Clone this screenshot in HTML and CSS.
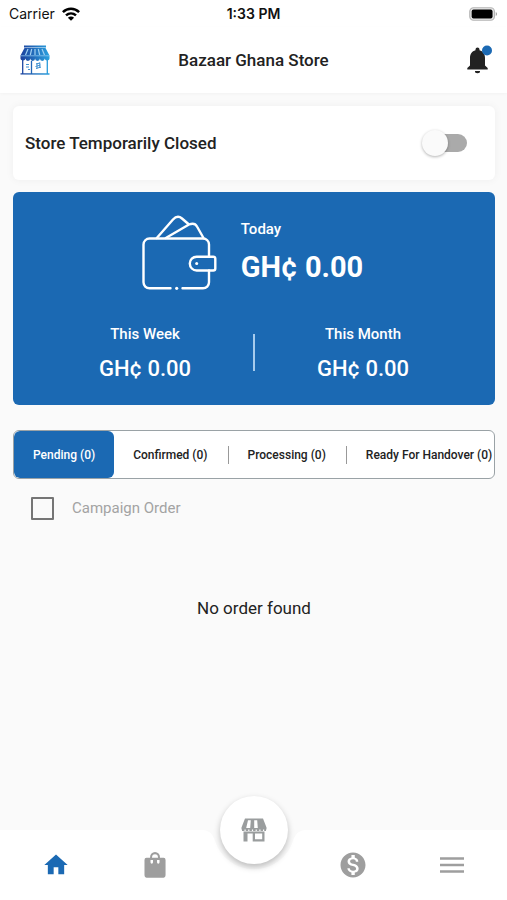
FILE: index.html
```html
<!DOCTYPE html>
<html lang="en">
<head>
<meta charset="utf-8">
<meta name="viewport" content="width=device-width, initial-scale=1">
<title>Bazaar Ghana Store</title>
<link rel="stylesheet" href="styles.css">
</head>
<body>
<div class="status">
  <div class="carrier">Carrier
    <svg width="18" height="14" viewBox="0 0 18 14" aria-hidden="true">
      <g fill="none" stroke="#000" stroke-width="2.5">
        <path d="M.9 5.2C5.5.7 12.500.7 17.100 5.200"/>
        <path d="M4 8.400c2.900-2.700 7.100-2.700 10 0"/>
      </g>
      <path d="M9 13.800 5.900 10.700c1.800-1.500 4.400-1.500 6.200 0z"/>
    </svg>
  </div>
  <div class="time">1:33 PM</div>
  <svg class="battery" width="29" height="14" viewBox="0 0 31 15" aria-hidden="true">
    <rect x=".8" y=".8" width="26.400" height="13.400" rx="4" fill="#e8e8e8" stroke="#b5b5b5" stroke-width="1.300"/>
    <rect x="2.800" y="2.800" width="22.400" height="9.400" rx="2"/>
    <path d="M28.600 5.300c1.900.8 1.900 3.600 0 4.400z" fill="#a5a5a5"/>
  </svg>
</div>

<header class="header">
  <svg class="logo" width="30" height="30" viewBox="0 0 30 30" aria-hidden="true">
    <defs>
      <linearGradient id="blue" gradientUnits="userSpaceOnUse" x1="0" y1="0" x2="30" y2="0">
        <stop offset="0" stop-color="#1c3f9c"/>
        <stop offset="1" stop-color="#2aa3e0"/>
      </linearGradient>
    </defs>
    <path fill="url(#blue)" d="M4 .5h22v2H4zM4.500 3h21L29.500 10.500v2a2.400 2.400 0 0 1-4.800 1 2.400 2.400 0 0 1-4.800 0 2.400 2.400 0 0 1-4.800 0 2.400 2.400 0 0 1-4.800 0 2.400 2.400 0 0 1-4.800 0A2.400 2.400 0 0 1 .5 12.500v-2z"/>
    <path fill="none" stroke="#9fd0f2" stroke-width="1.200" d="M8 4 5.500 10M11.700 4l-1.400 6M15 4v6M18.300 4l1.400 6M22 4l2.500 6"/>
    <path fill="none" stroke="#8cc6ef" stroke-width=".8" d="M1 10.800h28"/>
    <path fill="none" stroke="url(#blue)" stroke-width="1.300" d="M2.700 15v13.500M27.300 15v13.500M11.500 16v12.500M.5 28.900l29 .1"/>
    <path fill="none" stroke="#3e8fd0" stroke-width="1" d="M6 19.500h3M6 22h3M8 24.500h2M16 19l4-1M15.500 21.500l5-1.500M16 23.500l5-1.500M17 18v5.500M19.800 17.500v5.500"/>
  </svg>
  <h1>Bazaar Ghana Store</h1>
  <button class="bell" type="button" aria-label="Notifications">
    <svg width="26" height="30" viewBox="0 0 26 30" aria-hidden="true">
      <path fill="#222" d="M10.500 28.200a2.500 2 0 0 1-2.500-2.200h5a2.500 2 0 0 1-2.500 2.200zM18 20.500l2.700 2.500v1.400H.3V23L3 20.500V13c0-4 2-6.800 5.500-7.700v-.8a2 2 0 0 1 4 0v.8C16 6.200 18 9 18 13z"/>
      <circle cx="20" cy="5.500" r="5" fill="#1b69b3"/>
    </svg>
  </button>
</header>

<main>
  <label class="closed">
    <span>Store Temporarily Closed</span>
    <input class="switch" type="checkbox" role="switch">
  </label>

  <section class="earnings">
    <div class="today">
      <svg width="76" height="76" viewBox="0 0 76 76" fill="none" stroke="#fff" stroke-width="2.400" stroke-linecap="round" stroke-linejoin="round" aria-hidden="true">
        <path d="M29.500 74.300H8.500a6 6 0 0 1-6-6V30.500a6 6 0 0 1 6-6H62a6 6 0 0 1 6 6v12M68 56.500v11.800a6 6 0 0 1-6 6H41.500"/>
        <path d="M74.300 44.500v10a2 2 0 0 1-2 2H55.700a6.900 6.900 0 0 1 0-13.800h16.600a2 2 0 0 1 2 1.800z"/>
        <path d="M15.800 24 32 5.500q4.500-5 9-1L48 10.500M24.800 24 48 10.500c4-1.600 6.500-.8 8 2L62.500 24"/>
        <g fill="#fff" stroke="none"><circle cx="55.700" cy="49.500" r="1.500"/><circle cx="35.700" cy="74.300" r="1.600"/></g>
      </svg>
      <div>
        <h2>Today</h2>
        <p class="total">GH¢ 0.00</p>
      </div>
    </div>
    <div class="periods">
      <div>
        <h2>This Week</h2>
        <p>GH¢ 0.00</p>
      </div>
      <hr>
      <div>
        <h2>This Month</h2>
        <p>GH¢ 0.00</p>
      </div>
    </div>
  </section>

  <div class="tabs" role="tablist">
    <button type="button" role="tab" aria-selected="true">Pending (0)</button>
    <button type="button" role="tab">Confirmed (0)</button>
    <button type="button" role="tab">Processing (0)</button>
    <button type="button" role="tab">Ready For Handover (0)</button>
  </div>

  <label class="campaign">
    <input type="checkbox">
    <span>Campaign Order</span>
  </label>

  <p class="empty">No order found</p>
</main>

<nav class="nav">
  <div class="bar" aria-hidden="true">
    <span></span>
    <svg width="110" height="70" viewBox="0 0 110 70"><path fill="#fff" d="M0 0h3C11 0 14 5 16 11A41 41 0 0 0 94 11C96 5 99 0 107 0h3v70H0z"/></svg>
    <span></span>
  </div>
  <a href="#home" aria-label="Home">
    <svg width="28" height="28" viewBox="0 0 24 24" fill="#1b69b3"><path d="M10 20v-6h4v6h5v-8h3L12 3 2 12h3v8z"/></svg>
  </a>
  <a href="#orders" aria-label="Orders">
    <svg width="28" height="28" viewBox="0 0 24 24" fill="#9e9e9e"><path d="M20.500 5.500H17a5 5 0 0 0-10 0H3.500a2 2 0 0 0-2 2V21a2 2 0 0 0 2 2h17a2 2 0 0 0 2-2V7.500a2 2 0 0 0-2-2zM10 9.500a1.200 1.200 0 0 1-2.500 0v-2H10zm-1-4a3 3 0 0 1 6 0zm7.500 4a1.200 1.200 0 0 1-2.500 0v-2h2.500z" transform="translate(1.700 .3) scale(.86 .98)"/></svg>
  </a>
  <a class="store" href="#store" aria-label="Store">
    <svg width="26" height="24" viewBox="0 0 26 24" fill="#9a9d9e">
      <path fill-rule="evenodd" d="M4 .5h18l3.500 9v2H.5v-2zM7 2.300 5.200 10h4l.6-7.700zM13.200 2.300V10h3.600l-.6-7.700z"/>
      <path fill="none" stroke="#9a9d9e" stroke-width="1.800" stroke-dasharray="2.500 1.200" d="M1 12h24"/>
      <path fill-rule="evenodd" d="M2.500 13.500h21v10H11.700V15.500H6.500v8h-4zM14 15.500v5.700h7.200v-5.700z"/>
    </svg>
  </a>
  <a href="#wallet" aria-label="Wallet">
    <svg width="30" height="30" viewBox="0 0 24 24" fill="#9e9e9e"><path d="M12 2C6.480 2 2 6.480 2 12s4.480 10 10 10 10-4.480 10-10S17.520 2 12 2zm1.410 16.090V20h-2.670v-1.930c-1.710-.36-3.160-1.460-3.270-3.400h1.960c.1 1.050.82 1.870 2.650 1.870 1.960 0 2.400-.98 2.400-1.590 0-.83-.44-1.610-2.670-2.140-2.480-.6-4.180-1.620-4.180-3.670 0-1.720 1.390-2.840 3.110-3.210V4h2.670v1.950c1.860.45 2.790 1.860 2.850 3.390H14.300c-.05-1.110-.64-1.870-2.220-1.870-1.500 0-2.400.68-2.400 1.640 0 .84.650 1.390 2.670 1.910s4.180 1.390 4.180 3.910c-.01 1.830-1.380 2.830-3.120 3.160z"/></svg>
  </a>
  <a href="#menu" aria-label="Menu">
    <svg width="24" height="16" viewBox="0 0 24 16" stroke="#9e9e9e" stroke-width="2.400"><path d="M0 1.500h24M0 8h24M0 14.500h24"/></svg>
  </a>
</nav>
</body>
</html>
```
FILE: styles.css
```css
* {
  box-sizing: border-box;
}

body {
  display: flex;
  flex-direction: column;
  min-height: 100vh;
  margin: 0;
  background: #fafafa;
  color: #222;
  font-family: Roboto, "Liberation Sans", sans-serif;
}

h1, h2, p {
  margin: 0;
  font-weight: 500;
}

button {
  padding: 0;
  border: 0;
  background: none;
  color: inherit;
  font: inherit;
}

svg {
  display: block;
}

.status {
  display: grid;
  grid-template-columns: 1fr auto 1fr;
  align-items: center;
  height: 27px;
  padding: 0 9px;
  background: #fff;
  color: #111;
  font-family: Inter, Roboto, sans-serif;
  font-size: 14px;
}

.carrier {
  display: flex;
  align-items: center;
  gap: 7px;
}

.time {
  font-weight: 600;
}

.battery {
  justify-self: end;
}

.header {
  display: grid;
  grid-template-columns: 1fr auto 1fr;
  align-items: center;
  height: 66px;
  padding: 0 14px;
  background: #fff;
  box-shadow: 0 1px 3px rgba(0, 0, 0, 0.03);
}

.logo {
  margin-left: 6px;
}

h1 {
  font-size: 17px;
}

.bell {
  justify-self: end;
}

main {
  flex: 1;
  padding: 13px 12px 0 13px;
}

.closed {
  display: flex;
  align-items: center;
  justify-content: space-between;
  height: 74px;
  padding: 0 28px 0 12px;
  border-radius: 6px;
  background: #fff;
  box-shadow: 0 0 8px rgba(0, 0, 0, 0.05);
  font-size: 17px;
  font-weight: 500;
}

.switch {
  position: relative;
  appearance: none;
  width: 40px;
  height: 18px;
  margin: 0;
  border-radius: 9px;
  background: #aaa;
}

.switch::before {
  content: "";
  position: absolute;
  top: -4px;
  left: -5px;
  width: 26px;
  height: 26px;
  border-radius: 50%;
  background: #fafafa;
  box-shadow: 0 1px 3px rgba(0, 0, 0, 0.3);
}

.switch:checked::before {
  left: 19px;
}

.earnings {
  margin-top: 12px;
  padding: 22px 24px;
  height: 213px;
  border-radius: 6px;
  background: #1b69b3;
  color: #fff;
}

.today {
  display: flex;
  justify-content: center;
  gap: 24px;
  padding-right: 4px;
}

h2 {
  padding-top: 5px;
  font-size: 15px;
  line-height: 20px;
}

.total {
  margin-top: 8px;
  font-size: 29px;
  font-weight: 700;
  line-height: 40px;
}

.periods {
  display: grid;
  grid-template-columns: 1fr auto 1fr;
  align-items: center;
  margin-top: 29px;
  text-align: center;
}

.periods p {
  margin-top: 8px;
  font-size: 22px;
  line-height: 34px;
}

hr {
  width: 2px;
  height: 37px;
  margin: 0;
  border: 0;
  background: #a6cbed;
}

.tabs {
  display: flex;
  height: 49px;
  margin-top: 25px;
  overflow: hidden;
  border: 1px solid #9aa2a6;
  border-radius: 6px;
  background: #fff;
  font-size: 12px;
  font-weight: 500;
}

.tabs button {
  display: flex;
  flex: none;
  align-items: center;
  padding-left: 19px;
  white-space: nowrap;
}

.tabs button:nth-child(n + 2):not(:last-child)::after {
  content: "";
  width: 1px;
  height: 18px;
  margin-left: 20px;
  background: #999;
}

.tabs [aria-selected="true"] {
  padding: 0 19px;
  border-radius: 6px;
  background: #1b69b3;
  color: #fff;
}

.campaign {
  display: flex;
  align-items: center;
  gap: 18px;
  height: 58px;
  padding-left: 18px;
  color: #a3a3a3;
  font-size: 15px;
}

.campaign input {
  appearance: none;
  width: 23px;
  height: 23px;
  margin: 0;
  border: 2px solid #757575;
  border-radius: 1px;
}

.empty {
  margin-top: 59px;
  font-size: 17px;
  font-weight: 400;
  line-height: 24px;
  text-align: center;
}

.nav {
  position: relative;
  display: grid;
  grid-template-columns: repeat(5, 1fr);
  height: 70px;
  padding: 0 6px 0 7px;
}

.bar {
  position: absolute;
  inset: 0;
  display: flex;
}

.bar span {
  flex: 1;
  background: #fff;
}

.nav a {
  position: relative;
  display: grid;
  place-items: center;
}

.nav .store {
  justify-self: center;
  width: 68px;
  height: 68px;
  margin-top: -34px;
  border-radius: 50%;
  background: #fff;
  box-shadow: 0 3px 6px rgba(0, 0, 0, 0.25);
}
```
